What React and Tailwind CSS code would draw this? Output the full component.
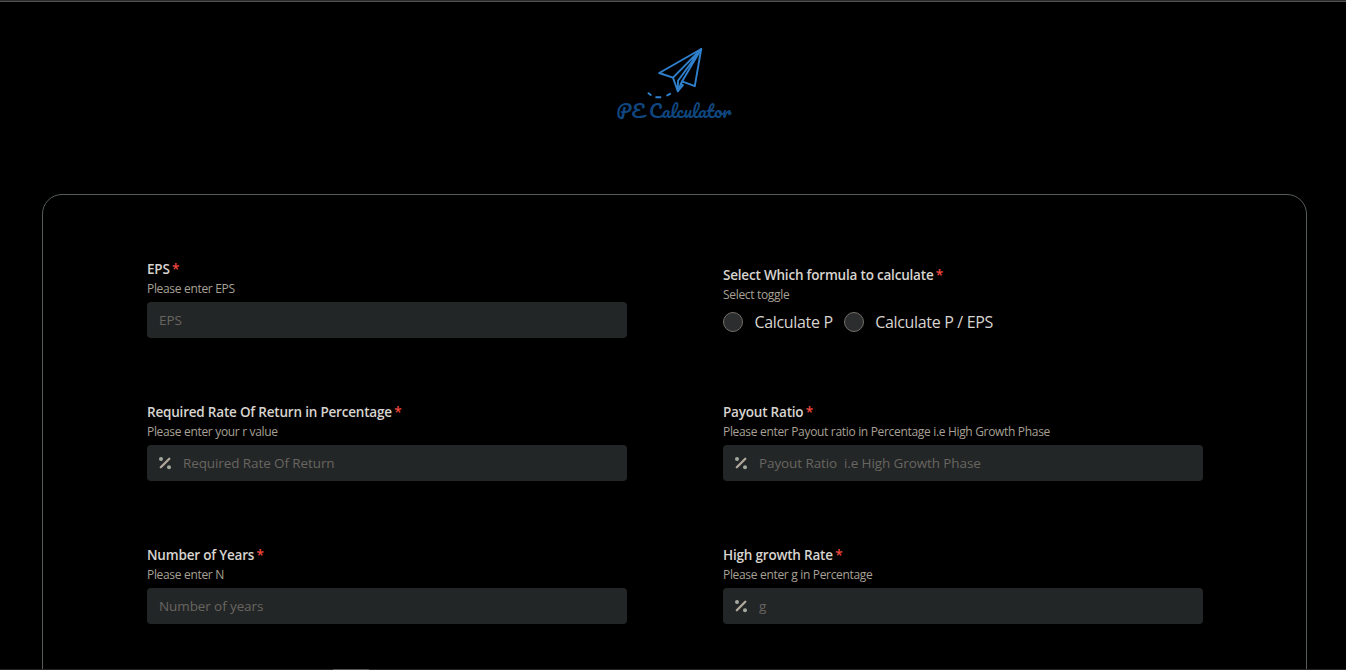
import { useState } from "react";

function PercentIcon() {
    return (
        <svg
            className="w-[14px] h-[14px] shrink-0"
            viewBox="0 0 14 14"
            fill="none"
        >
            <path
                d="M2.8 11.3 11.3 2.8"
                stroke="#b2a99c"
                strokeWidth="2.3"
                strokeLinecap="round"
            />
            <circle cx="3" cy="3" r="2" fill="#a3a89d" />
            <circle cx="11" cy="11.2" r="2" fill="#a3a89d" />
        </svg>
    );
}

function Logo() {
    return (
        <svg
            className="w-[130px] h-[84px]"
            viewBox="-4 0 130 84"
            fill="none"
        >
            {/* Paper plane */}
            <g
                stroke="#2f80cd"
                strokeWidth="1.9"
                strokeLinejoin="round"
                strokeLinecap="round"
            >
                <path d="M88.2 5 46.2 29 60 33.6 64.8 47.2 69 37.4 81.8 42.2 88.2 5Z" />
                <path d="M88.2 5 60 33.6M88.2 5 69 37.4M88.2 5 65 36.8 64.8 47.2M67.6 39.8 70 41.2 64.8 47.2" />
                <path d="M35.5 49.2 37.8 51M43.2 53.2 47.4 53.2M54.2 51.4 57.2 49.8" />
            </g>
            <text
                x="3.5"
                y="73.5"
                textLength="115"
                lengthAdjust="spacingAndGlyphs"
                fill="#10467f"
                className="font-['Pacifico','Liberation_Serif',cursive] text-[17.5px]"
            >
                PE Calculator
            </text>
        </svg>
    );
}

function FieldHeader({ label, description }) {
    return (
        <>
            <div className="h-[22px] text-[13.5px] leading-[22px] font-semibold tracking-[-0.2px] text-[#d8d4cf] whitespace-nowrap">
                {label} <span className="-ml-px text-[#f5483f]">*</span>
            </div>
            <div className="h-[16px] text-[12px] leading-[17px] tracking-[-0.32px] text-[#a8a095] whitespace-nowrap">
                {description}
            </div>
        </>
    );
}

function Field({ label, description, placeholder, percent }) {
    return (
        <div>
            <FieldHeader label={label} description={description} />
            <div className="mt-[6px] flex h-9 items-center rounded bg-[#232627] px-[11px] gap-[11px]">
                {percent && <PercentIcon />}
                <input
                    placeholder={placeholder}
                    className={`min-w-0 flex-1 bg-transparent text-[13.5px] tracking-[-0.1px] text-[#d8d4cf] placeholder-[#686560] outline-none ${percent ? "" : "pl-px"}`}
                />
            </div>
        </div>
    );
}

const FORMULAS = ["Calculate P", "Calculate P / EPS"];

export default function App() {
    const [formula, setFormula] = useState("");

    return (
        <div className="flex h-[670px] w-[1346px] flex-col overflow-hidden bg-black font-['Segoe_UI','Open_Sans',sans-serif]">
            <div className="h-[2px] shrink-0 border-b border-[#525252] bg-[#2b2b2b]" />

            <main className="min-h-0 flex-1 overflow-hidden">
                <header className="flex h-[192px] justify-center pt-[42px] pl-[1px]">
                    <Logo />
                </header>

                <form className="ml-[42px] h-[700px] w-[1265px] rounded-[20px] border border-[#565c5e] pt-[63px] pl-[104px]">
                    <div className="grid grid-cols-[480px_480px] gap-x-24 gap-y-[63px]">
                        <Field
                            label="EPS"
                            description="Please enter EPS"
                            placeholder="EPS"
                        />

                        <div className="pt-[6px]">
                            <FieldHeader
                                label="Select Which formula to calculate"
                                description="Select toggle"
                            />
                            <div className="mt-[10px] flex gap-[11px]">
                                {FORMULAS.map((name) => (
                                    <label
                                        key={name}
                                        className="flex h-5 items-center gap-[11.5px] text-[16px] leading-5 tracking-[-0.33px] whitespace-nowrap text-[#d8d4cf]"
                                    >
                                        <input
                                            type="radio"
                                            name="formula"
                                            checked={formula === name}
                                            onChange={() => setFormula(name)}
                                            className="size-5 appearance-none rounded-full border border-[#736e69] bg-[#2b2d2e] checked:border-[6px]"
                                        />
                                        {name}
                                    </label>
                                ))}
                            </div>
                        </div>

                        <Field
                            label="Required Rate Of Return in Percentage"
                            description="Please enter your r value"
                            placeholder="Required Rate Of Return"
                            percent
                        />
                        <Field
                            label="Payout Ratio"
                            description="Please enter Payout ratio in Percentage i.e High Growth Phase"
                            placeholder="Payout Ratio  i.e High Growth Phase"
                            percent
                        />
                        <Field
                            label="Number of Years"
                            description="Please enter N"
                            placeholder="Number of years"
                        />
                        <Field
                            label="High growth Rate"
                            description="Please enter g in Percentage"
                            placeholder="g"
                            percent
                        />
                    </div>
                </form>
            </main>

            <div className="h-px shrink-0 bg-[#252525] pl-[333px]">
                <div className="h-px w-9 bg-[#555555]" />
            </div>
        </div>
    );
}
